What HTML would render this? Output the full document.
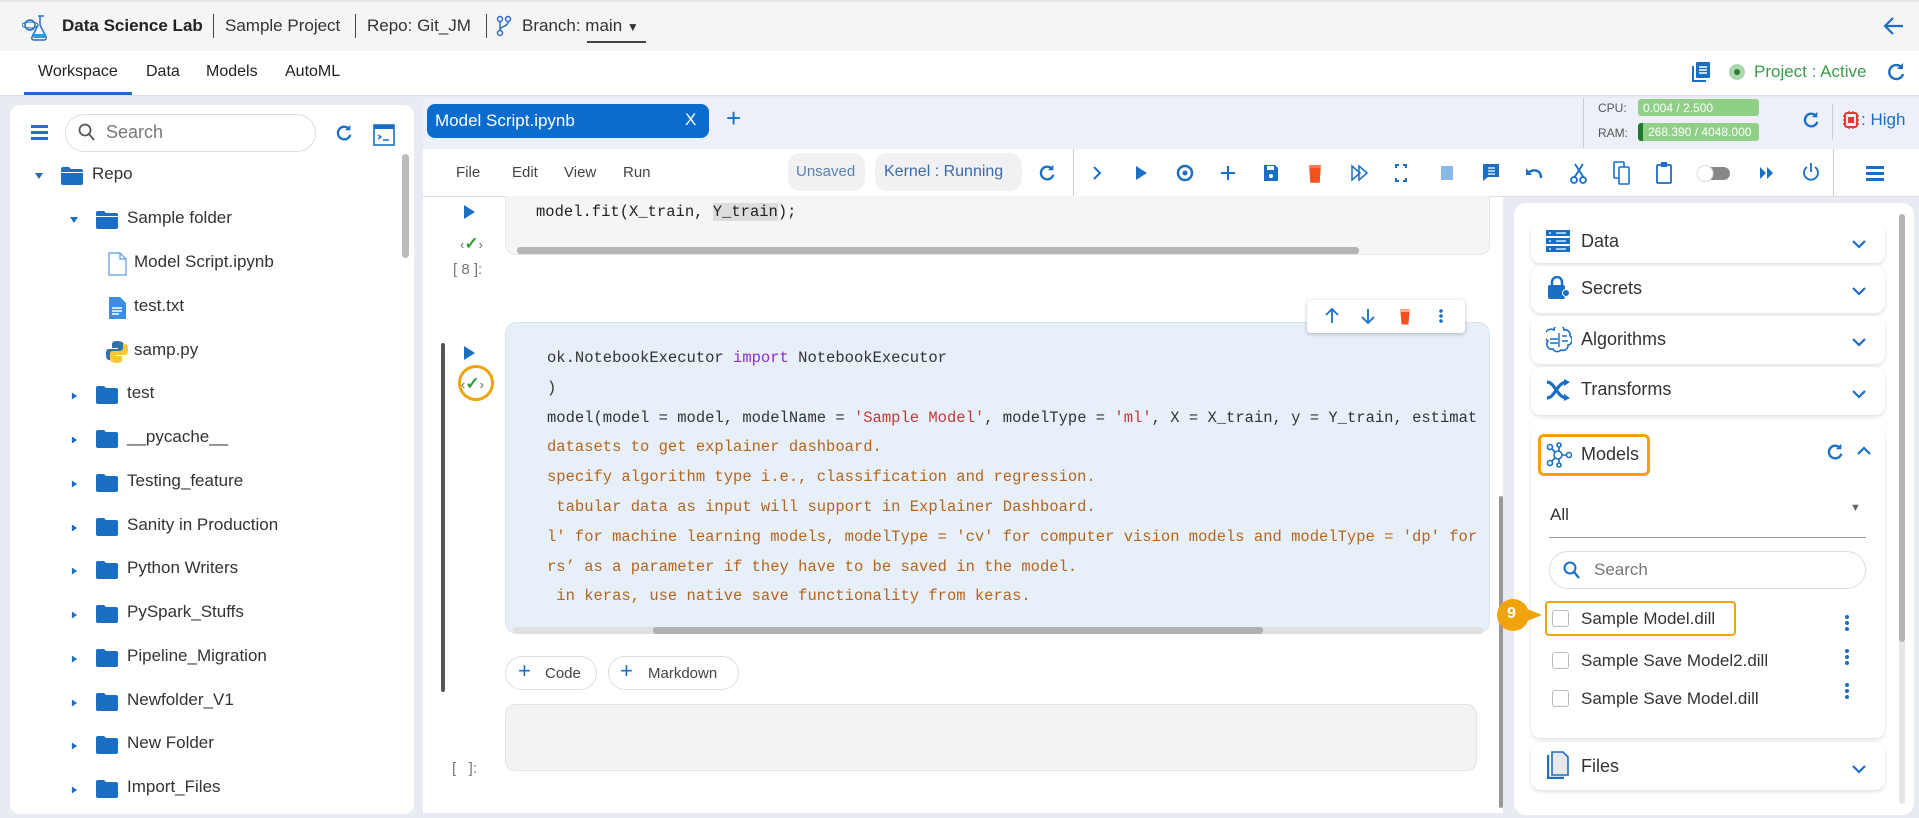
<!DOCTYPE html>
<html><head><meta charset="utf-8"><style>
*{box-sizing:border-box;margin:0;padding:0}
body{width:1919px;height:818px;overflow:hidden;background:#e9ebf2;font-family:"Liberation Sans",sans-serif;color:#333;position:relative}
.a{position:absolute}
.mono{font-family:"Liberation Mono",monospace;font-size:15.5px;white-space:pre}
.ti{position:absolute;font-size:17px;color:#333;white-space:nowrap}
.card{position:absolute;left:1531px;width:354px;background:#fff;border-radius:10px;box-shadow:0 2px 4px rgba(0,0,0,.12)}
.card .t{position:absolute;left:50px;top:10px;font-size:18px;color:#333}
.chev{position:absolute;right:18px;top:14px}
</style></head><body>
<!-- top header -->
<div class="a" style="left:0;top:0;width:1919px;height:51px;background:#f5f5f6;border-top:2px solid #e6e6e6"></div>
<svg class="a" style="left:22px;top:12px" width="28" height="30" viewBox="0 0 28 30"><circle cx="8" cy="13" r="5" fill="none" stroke="#2b6fbf" stroke-width="1.5"/><ellipse cx="8" cy="13" rx="8" ry="3" fill="none" stroke="#2b6fbf" stroke-width="1"/><path d="M16 4h6M18 4v9l6 12a2 2 0 0 1-2 3H12a2 2 0 0 1-2-3l6-12" fill="none" stroke="#2b6fbf" stroke-width="1.5"/><path d="M12 22h12l1 4H11z" fill="#2b9ae0"/></svg>
<div class="a" style="left:62px;top:16px;font-size:17px;font-weight:bold;color:#222">Data Science Lab</div>
<div class="a" style="left:213px;top:14px;width:1px;height:24px;background:#444"></div>
<div class="a" style="left:225px;top:16px;font-size:17px;color:#333">Sample Project</div>
<div class="a" style="left:355px;top:14px;width:1px;height:24px;background:#444"></div>
<div class="a" style="left:367px;top:16px;font-size:17px;color:#333">Repo: Git_JM</div>
<div class="a" style="left:486px;top:14px;width:1px;height:24px;background:#444"></div>
<svg class="a" style="left:496px;top:15px" width="16" height="22" viewBox="0 0 16 22"><circle cx="4" cy="4" r="2.5" fill="none" stroke="#2b6fbf" stroke-width="1.5"/><circle cx="12" cy="4" r="2.5" fill="none" stroke="#2b6fbf" stroke-width="1.5"/><circle cx="4" cy="18" r="2.5" fill="none" stroke="#2b6fbf" stroke-width="1.5"/><path d="M4 6.5v9M12 6.5c0 6-8 4-8 9" fill="none" stroke="#2b6fbf" stroke-width="1.5"/></svg>
<div class="a" style="left:522px;top:16px;font-size:17px;color:#333">Branch: main <span style="font-size:12px">▼</span></div>
<div class="a" style="left:587px;top:41px;width:59px;height:2px;background:#444"></div>
<svg class="a" style="left:1883px;top:16px" width="22" height="20" viewBox="0 0 22 20"><path d="M20 10H3M10 2L2 10l8 8" fill="none" stroke="#1a6fc4" stroke-width="2.2"/></svg>
<!-- nav -->
<div class="a" style="left:0;top:51px;width:1919px;height:45px;background:#fff;border-bottom:1px solid #dde"></div>
<div class="a" style="left:38px;top:63px;font-size:16px;color:#222">Workspace</div>
<div class="a" style="left:146px;top:63px;font-size:16px;color:#222">Data</div>
<div class="a" style="left:206px;top:63px;font-size:16px;color:#222">Models</div>
<div class="a" style="left:285px;top:63px;font-size:16px;color:#222">AutoML</div>
<div class="a" style="left:24px;top:92px;width:108px;height:3px;background:#1a6fc4"></div>
<svg class="a" style="left:1691px;top:61px" width="20" height="22" viewBox="0 0 20 22"><rect x="5" y="1" width="14" height="16" rx="1" fill="#1a6fc4"/><path d="M2 5v15h13" fill="none" stroke="#1a6fc4" stroke-width="2"/><path d="M8 6h8M8 9h8M8 12h8" stroke="#fff" stroke-width="1.5"/></svg>
<div class="a" style="left:1729px;top:64px;width:16px;height:16px;border-radius:50%;background:#a8d8ae"></div>
<div class="a" style="left:1734px;top:69px;width:6px;height:6px;border-radius:50%;background:#2e7d32"></div>
<div class="a" style="left:1754px;top:62px;font-size:17px;color:#3a9a4a">Project : Active</div>
<svg class="a" style="left:1886px;top:62px" width="20" height="20" viewBox="0 0 20 20"><path d="M16 6A7 7 0 1 0 17 12" fill="none" stroke="#1a6fc4" stroke-width="2.4"/><path d="M17 1v6h-6z" fill="#1a6fc4"/></svg>
<!-- left panel -->
<div class="a" style="left:10px;top:105px;width:404px;height:709px;background:#fff;border-radius:10px"></div>
<div class="a" style="left:31px;top:125px;width:17px;height:3px;background:#2b6fbf;box-shadow:0 6px 0 #2b6fbf,0 12px 0 #2b6fbf"></div>
<div class="a" style="left:65px;top:114px;width:251px;height:38px;border:1px solid #ddd;border-radius:19px"></div>
<svg class="a" style="left:78px;top:123px" width="18" height="19" viewBox="0 0 18 19"><circle cx="7" cy="7" r="5.5" fill="none" stroke="#555" stroke-width="1.8"/><path d="M11 11l5 6" stroke="#555" stroke-width="1.8"/></svg>
<div class="a" style="left:106px;top:122px;font-size:18px;color:#777">Search</div>
<svg class="a" style="left:335px;top:124px" width="18" height="18" viewBox="0 0 20 20"><path d="M16 6A7 7 0 1 0 17 12" fill="none" stroke="#1a6fc4" stroke-width="2.6"/><path d="M17 1v6h-6z" fill="#1a6fc4"/></svg>
<svg class="a" style="left:373px;top:124px" width="22" height="22" viewBox="0 0 22 22"><rect x="1" y="1" width="20" height="20" fill="none" stroke="#1a6fc4" stroke-width="1.6"/><rect x="1" y="1" width="20" height="4" fill="#1a6fc4"/><path d="M5 11l3 2-3 2M10 16h6" stroke="#1a6fc4" stroke-width="1.4" fill="none"/></svg>
<div class="a" style="left:402px;top:154px;width:7px;height:104px;background:#bbb;border-radius:4px"></div>
<svg width="0" height="0" style="position:absolute"><defs>
<symbol id="fold" viewBox="0 0 24 20"><path d="M1 3a2 2 0 0 1 2-2h6l2 2h10a2 2 0 0 1 2 2v12a2 2 0 0 1-2 2H3a2 2 0 0 1-2-2z" fill="#1a6fc4"/></symbol>
<symbol id="ofold" viewBox="0 0 24 20"><path d="M1 3a2 2 0 0 1 2-2h6l2 2h10a2 2 0 0 1 2 2v1H1z" fill="#1a6fc4"/><path d="M1 7h22v10a2 2 0 0 1-2 2H3a2 2 0 0 1-2-2z" fill="#1a6fc4"/></symbol>
<symbol id="rt" viewBox="0 0 8 10"><path d="M1 1l6 4-6 4z" fill="#1a6fc4"/></symbol>
<symbol id="dn" viewBox="0 0 10 8"><path d="M1 1h8l-4 6z" fill="#1a6fc4"/></symbol>
<symbol id="chv" viewBox="0 0 16 10"><path d="M2 2l6 6 6-6" fill="none" stroke="#1a6fc4" stroke-width="2.2"/></symbol>
</defs></svg>
<svg class="a" style="left:34px;top:172px" width="10" height="8"><use href="#dn"/></svg>
<svg class="a" style="left:60px;top:166px" width="24" height="20"><use href="#ofold"/></svg>
<div class="ti" style="left:92px;top:164px">Repo</div>
<svg class="a" style="left:69px;top:216px" width="10" height="8"><use href="#dn"/></svg>
<svg class="a" style="left:95px;top:210px" width="24" height="20"><use href="#ofold"/></svg>
<div class="ti" style="left:127px;top:208px">Sample folder</div>
<svg class="a" style="left:108px;top:252px" width="19" height="24" viewBox="0 0 19 24"><path d="M1 1h11l6 6v16H1z" fill="none" stroke="#5a9ae0" stroke-width="1.2"/><path d="M12 1v6h6" fill="none" stroke="#5a9ae0" stroke-width="1.2"/></svg>
<div class="ti" style="left:134px;top:252px">Model Script.ipynb</div>
<svg class="a" style="left:108px;top:296px" width="19" height="24" viewBox="0 0 19 24"><path d="M1 1h11l6 6v16H1z" fill="#3d8de0"/><path d="M4 12h10M4 15h10M4 18h7" stroke="#fff" stroke-width="1.4"/></svg>
<div class="ti" style="left:134px;top:296px">test.txt</div>
<svg class="a" style="left:105px;top:340px" width="24" height="24" viewBox="0 0 24 24"><path d="M12 1c-5 0-5 2-5 4v3h6v1H4c-3 0-3 3-3 6s1 5 3 5h2v-4c0-2 2-3 4-3h6c2 0 3-1 3-3V5c0-2-2-4-7-4z" fill="#3572a5"/><path d="M12 23c5 0 5-2 5-4v-3h-6v-1h9c3 0 3-3 3-6s-1-5-3-5h-2v4c0 2-2 3-4 3H8c-2 0-3 1-3 3v5c0 2 2 4 7 4z" fill="#f7c63d"/></svg>
<div class="ti" style="left:134px;top:340px">samp.py</div>
<svg class="a" style="left:71px;top:391px" width="7" height="10"><use href="#rt"/></svg><svg class="a" style="left:95px;top:385px" width="24" height="20"><use href="#fold"/></svg><div class="ti" style="left:127px;top:383px">test</div>
<svg class="a" style="left:71px;top:435px" width="7" height="10"><use href="#rt"/></svg><svg class="a" style="left:95px;top:429px" width="24" height="20"><use href="#fold"/></svg><div class="ti" style="left:127px;top:427px">__pycache__</div>
<svg class="a" style="left:71px;top:479px" width="7" height="10"><use href="#rt"/></svg><svg class="a" style="left:95px;top:473px" width="24" height="20"><use href="#fold"/></svg><div class="ti" style="left:127px;top:471px">Testing_feature</div>
<svg class="a" style="left:71px;top:523px" width="7" height="10"><use href="#rt"/></svg><svg class="a" style="left:95px;top:517px" width="24" height="20"><use href="#fold"/></svg><div class="ti" style="left:127px;top:515px">Sanity in Production</div>
<svg class="a" style="left:71px;top:566px" width="7" height="10"><use href="#rt"/></svg><svg class="a" style="left:95px;top:560px" width="24" height="20"><use href="#fold"/></svg><div class="ti" style="left:127px;top:558px">Python Writers</div>
<svg class="a" style="left:71px;top:610px" width="7" height="10"><use href="#rt"/></svg><svg class="a" style="left:95px;top:604px" width="24" height="20"><use href="#fold"/></svg><div class="ti" style="left:127px;top:602px">PySpark_Stuffs</div>
<svg class="a" style="left:71px;top:654px" width="7" height="10"><use href="#rt"/></svg><svg class="a" style="left:95px;top:648px" width="24" height="20"><use href="#fold"/></svg><div class="ti" style="left:127px;top:646px">Pipeline_Migration</div>
<svg class="a" style="left:71px;top:698px" width="7" height="10"><use href="#rt"/></svg><svg class="a" style="left:95px;top:692px" width="24" height="20"><use href="#fold"/></svg><div class="ti" style="left:127px;top:690px">Newfolder_V1</div>
<svg class="a" style="left:71px;top:741px" width="7" height="10"><use href="#rt"/></svg><svg class="a" style="left:95px;top:735px" width="24" height="20"><use href="#fold"/></svg><div class="ti" style="left:127px;top:733px">New Folder</div>
<svg class="a" style="left:71px;top:785px" width="7" height="10"><use href="#rt"/></svg><svg class="a" style="left:95px;top:779px" width="24" height="20"><use href="#fold"/></svg><div class="ti" style="left:127px;top:777px">Import_Files</div>
<!-- editor -->
<div class="a" style="left:423px;top:98px;width:1080px;height:51px;background:#edf0f8"></div>
<div class="a" style="left:427px;top:104px;width:282px;height:34px;background:#0a6ccf;border-radius:8px"></div>
<div class="a" style="left:435px;top:111px;font-size:17px;color:#fff">Model Script.ipynb</div>
<div class="a" style="left:685px;top:110px;font-size:17px;color:#fff">X</div>
<div class="a" style="left:726px;top:104px;font-size:26px;color:#1a6fc4;line-height:28px">+</div>
<div class="a" style="left:423px;top:149px;width:1080px;height:664px;background:#fff"></div>
<div class="a" style="left:1503px;top:149px;width:416px;height:47px;background:#fff"></div>
<div class="a" style="left:423px;top:196px;width:1496px;height:1px;background:#e0e0e0"></div>
<div class="a" style="left:456px;top:164px;font-size:15px;color:#444">File</div>
<div class="a" style="left:512px;top:164px;font-size:15px;color:#444">Edit</div>
<div class="a" style="left:564px;top:164px;font-size:15px;color:#444">View</div>
<div class="a" style="left:623px;top:164px;font-size:15px;color:#444">Run</div>
<div class="a" style="left:788px;top:153px;width:77px;height:38px;background:#f1f1f3;border-radius:12px"></div>
<div class="a" style="left:796px;top:163px;font-size:15px;color:#5a7fb0">Unsaved</div>
<div class="a" style="left:875px;top:153px;width:147px;height:38px;background:#f1f1f3;border-radius:12px"></div>
<div class="a" style="left:884px;top:163px;font-size:16px;color:#3a6aa8">Kernel : Running</div>
<svg class="a" style="left:1038px;top:164px" width="18" height="18" viewBox="0 0 20 20"><path d="M16 6A7 7 0 1 0 17 12" fill="none" stroke="#1a6fc4" stroke-width="2.6"/><path d="M17 1v6h-6z" fill="#1a6fc4"/></svg>
<div class="a" style="left:1073px;top:149px;width:1px;height:47px;background:#ccc"></div>
<div class="a" style="left:1833px;top:149px;width:1px;height:47px;background:#ccc"></div>
<svg class="a" style="left:1085px;top:160px" width="740" height="26" viewBox="1085 160 740 26">
<g fill="#1a6fc4" stroke="#1a6fc4">
<path d="M1094 167l6 6-6 6" fill="none" stroke-width="2"/>
<path d="M1136 166l11 7-11 7z" stroke="none"/>
<circle cx="1185" cy="173" r="7" fill="none" stroke-width="2.5"/><circle cx="1185" cy="173" r="2.5" stroke="none"/>
<path d="M1228 166v14M1221 173h14" fill="none" stroke-width="2"/>
<path d="M1264 165h11l3 3v13h-14z" stroke="none"/><rect x="1267" y="166" width="7" height="4" fill="#fff" stroke="none"/><circle cx="1271" cy="176" r="2" fill="#fff" stroke="none"/>
<path d="M1309 166h12M1310 168h10l-1 14h-8z" fill="#f4511e" stroke="#f4511e" stroke-width="1.5"/>
<path d="M1352 166l8 7-8 7zM1359 166l8 7-8 7z" fill="none" stroke-width="1.5"/>
<path d="M1396 168v-3h3M1406 168v-3h-3M1396 178v3h3M1406 178v3h-3" fill="none" stroke-width="2"/>
<rect x="1441" y="166" width="12" height="14" fill="#8ab8e6" stroke="none"/>
<path d="M1483 164h16v13h-11l-5 4z" stroke="none"/><path d="M1488 168h7M1488 171h7M1488 174h7" stroke="#fff" stroke-width="1.2" fill="none"/>
<path d="M1541 178c0-6-4-9-10-7l-3 2" fill="none" stroke-width="2.4"/><path d="M1526 168v7h6z" stroke="none"/>
<circle cx="1574" cy="180" r="3" fill="none" stroke-width="1.8"/><circle cx="1583" cy="180" r="3" fill="none" stroke-width="1.8"/><path d="M1575 164l9 14M1583 164l-9 14" fill="none" stroke-width="1.8"/>
<rect x="1614" y="162" width="10" height="16" rx="1" fill="none" stroke-width="1.6"/><rect x="1619" y="167" width="10" height="17" rx="1" fill="#fff" stroke-width="1.6"/>
<rect x="1657" y="165" width="14" height="18" rx="1" fill="none" stroke-width="1.8"/><rect x="1661" y="162" width="6" height="5" stroke="none"/>
<path d="M1760 167l6 6-6 6zM1767 167l6 6-6 6z" stroke="none"/>
<path d="M1807 167a7 7 0 1 0 8 0M1811 163v9" fill="none" stroke-width="1.8"/>
</g>
<rect x="1700" y="167" width="30" height="13" rx="6.5" fill="#888"/><circle cx="1705" cy="173.5" r="8" fill="#fff" stroke="#ddd"/>
</svg>
<div class="a" style="left:1866px;top:166px;width:18px;height:2.5px;background:#1a6fc4;box-shadow:0 6px 0 #1a6fc4,0 12px 0 #1a6fc4"></div>
<!-- cpu -->
<div class="a" style="left:1503px;top:98px;width:416px;height:51px;background:#edf0f8"></div>
<div class="a" style="left:1583px;top:98px;width:1px;height:50px;background:#ccc"></div>
<div class="a" style="left:1598px;top:101px;font-size:12px;color:#555">CPU:</div>
<div class="a" style="left:1598px;top:126px;font-size:12px;color:#555">RAM:</div>
<div class="a" style="left:1638px;top:99px;width:121px;height:17px;background:#8fcf86;border-radius:3px;font-size:12px;color:#fff;padding:2px 5px">0.004 / 2.500</div>
<div class="a" style="left:1638px;top:123px;width:121px;height:18px;background:#8fcf86;border-radius:3px;font-size:12px;color:#fff;padding:2px 5px;border-left:5px solid #1b7a2a">268.390 / 4048.000</div>
<svg class="a" style="left:1802px;top:111px" width="18" height="18" viewBox="0 0 20 20"><path d="M16 6A7 7 0 1 0 17 12" fill="none" stroke="#1a6fc4" stroke-width="2.6"/><path d="M17 1v6h-6z" fill="#1a6fc4"/></svg>
<div class="a" style="left:1832px;top:104px;width:1px;height:36px;background:#ccc"></div>
<svg class="a" style="left:1842px;top:110px" width="18" height="20" viewBox="0 0 18 20"><rect x="3" y="3" width="12" height="14" rx="2" fill="none" stroke="#e53935" stroke-width="2"/><rect x="6" y="7" width="6" height="6" fill="#e53935"/><path d="M1 6h2M1 10h2M1 14h2M15 6h2M15 10h2M15 14h2M7 1v2M11 1v2M7 17v2M11 17v2" stroke="#e53935" stroke-width="1.4"/></svg>
<div class="a" style="left:1861px;top:110px;font-size:17px;color:#1a6fc4">: High</div>
<!-- cell 1 -->
<svg class="a" style="left:464px;top:205px" width="11" height="14"><path d="M0 0l11 7-11 7z" fill="#1a6fc4"/></svg>
<div class="a" style="left:460px;top:234px;font-size:13px;color:#666">‹<b style="color:#2e9e3a;font-size:17px">✓</b>›</div>
<div class="a" style="left:453px;top:261px;font-size:15px;color:#777">[ 8 ]:</div>
<div class="a" style="left:505px;top:196px;width:985px;height:59px;background:#f5f5f5;border-radius:0 0 10px 10px;border:1px solid #e6e6e6;border-top:none"></div>
<div class="a mono" style="left:536px;top:203px;color:#222">model.fit(X_train, <span style="background:#ddd">Y_train</span>);</div>
<div class="a" style="left:517px;top:247px;width:842px;height:7px;background:#b5b5b5;border-radius:3px"></div>
<!-- cell 2 -->
<div class="a" style="left:441px;top:343px;width:4px;height:349px;background:#555;border-radius:2px"></div>
<svg class="a" style="left:464px;top:346px" width="11" height="14"><path d="M0 0l11 7-11 7z" fill="#1a6fc4"/></svg>
<div class="a" style="left:458px;top:365px;width:36px;height:36px;border:3px solid #f0a30a;border-radius:50%"></div>
<div class="a" style="left:461px;top:374px;font-size:13px;color:#666">‹<b style="color:#2e9e3a;font-size:17px">✓</b>›</div>
<div class="a" style="left:505px;top:322px;width:985px;height:312px;background:#e7eff9;border-radius:12px;border:1px solid #dde4ee"></div>
<div class="a mono" style="left:547px;top:344px;line-height:29.8px;color:#333">ok.NotebookExecutor <span style="color:#8e2ad0">import</span> NotebookExecutor
)
model(model = model, modelName = <span style="color:#c23a3a">'Sample Model'</span>, modelType = <span style="color:#c23a3a">'ml'</span>, X = X_train, y = Y_train, estimat<span style="color:#b5651d">
datasets to get explainer dashboard.
specify algorithm type i.e., classification and regression.
 tabular data as input will support in Explainer Dashboard.
l' for machine learning models, modelType = 'cv' for computer vision models and modelType = 'dp' for
rs’ as a parameter if they have to be saved in the model.
 in keras, use native save functionality from keras.</span></div>
<div class="a" style="left:1490px;top:322px;width:13px;height:312px;background:#fff"></div>
<div class="a" style="left:513px;top:627px;width:970px;height:7px;background:#e0e0e0;border-radius:3px"></div>
<div class="a" style="left:653px;top:627px;width:610px;height:7px;background:#b0b0b0;border-radius:3px"></div>
<div class="a" style="left:1307px;top:300px;width:158px;height:33px;background:#fff;border-radius:4px;box-shadow:0 1px 4px rgba(0,0,0,.25)"></div>
<svg class="a" style="left:1320px;top:306px" width="140" height="20" viewBox="0 0 140 20"><path d="M12 17V3M6 9l6-6 6 6M48 3v14M42 11l6 6 6-6" fill="none" stroke="#1a6fc4" stroke-width="1.8"/><path d="M80 4h10M81 6h8l-1 12h-6z" fill="#f4511e" stroke="#f4511e"/><circle cx="121" cy="5" r="1.8" fill="#1a6fc4"/><circle cx="121" cy="10" r="1.8" fill="#1a6fc4"/><circle cx="121" cy="15" r="1.8" fill="#1a6fc4"/></svg>
<div class="a" style="left:1499px;top:496px;width:4px;height:312px;background:#999;border-radius:2px"></div>
<!-- add buttons -->
<div class="a" style="left:505px;top:656px;width:92px;height:34px;border:1px solid #ddd;border-radius:17px"></div>
<div class="a" style="left:518px;top:658px;font-size:22px;color:#1a6fc4">+</div>
<div class="a" style="left:545px;top:665px;font-size:15px;color:#444">Code</div>
<div class="a" style="left:608px;top:656px;width:131px;height:34px;border:1px solid #ddd;border-radius:17px"></div>
<div class="a" style="left:620px;top:658px;font-size:22px;color:#1a6fc4">+</div>
<div class="a" style="left:648px;top:665px;font-size:15px;color:#444">Markdown</div>
<div class="a" style="left:505px;top:704px;width:972px;height:67px;background:#f3f3f4;border:1px solid #e3e3e3;border-radius:10px"></div>
<div class="a" style="left:452px;top:760px;font-size:15px;color:#777">[&nbsp;&nbsp;&nbsp;]:</div>
<!-- right panel -->
<div class="a" style="left:1514px;top:203px;width:400px;height:612px;background:#fff;border-radius:12px"></div>
<div class="a" style="left:1899px;top:214px;width:6px;height:590px;background:#e6e6e6;border-radius:3px"></div>
<div class="a" style="left:1899px;top:214px;width:6px;height:428px;background:#b5b5b5;border-radius:3px"></div>
<div class="card" style="top:221px;height:42px"><svg class="a" style="left:15px;top:9px" width="24" height="22" viewBox="0 0 24 22"><rect x="0" y="0" width="24" height="6" fill="#1a6fc4"/><rect x="0" y="8" width="24" height="6" fill="#1a6fc4"/><rect x="0" y="16" width="24" height="6" fill="#1a6fc4"/><path d="M3 3h2M3 11h2M3 19h2M10 3h10M10 11h10M10 19h10" stroke="#fff" stroke-width="1.2"/></svg><div class="t">Data</div><svg class="chev" style="top:18px" width="16" height="10"><use href="#chv"/></svg></div>
<div class="card" style="top:266px;height:47px"><svg class="a" style="left:15px;top:10px" width="24" height="24" viewBox="0 0 24 24"><path d="M6 9V6a5 5 0 0 1 10 0v3" fill="none" stroke="#1a6fc4" stroke-width="2.5"/><rect x="2" y="9" width="17" height="14" rx="2" fill="#1a6fc4"/><circle cx="20" cy="17" r="3.5" fill="#1a6fc4" stroke="#fff"/></svg><div class="t" style="top:12px">Secrets</div><svg class="chev" style="top:20px" width="16" height="10"><use href="#chv"/></svg></div>
<div class="card" style="top:316px;height:48px"><svg class="a" style="left:15px;top:11px" width="26" height="26" viewBox="0 0 26 26"><path d="M8 3a5 5 0 0 1 10 0a5 5 0 0 1 6 6a5 5 0 0 1-2 9a5 5 0 0 1-7 5a5 5 0 0 1-8-1a5 5 0 0 1-5-8a5 5 0 0 1 6-11z" fill="none" stroke="#1a6fc4" stroke-width="1.6"/><path d="M4 12h8M4 16h8M13 6v14M16 9h5M16 14h6" stroke="#1a6fc4" stroke-width="1.4"/></svg><div class="t" style="top:13px">Algorithms</div><svg class="chev" style="top:21px" width="16" height="10"><use href="#chv"/></svg></div>
<div class="card" style="top:367px;height:48px"><svg class="a" style="left:15px;top:12px" width="24" height="22" viewBox="0 0 24 22"><path d="M1 3c8 0 10 16 20 16M1 19c8 0 10-16 20-16" fill="none" stroke="#1a6fc4" stroke-width="3.2"/><path d="M18 0l6 3-6 4zM18 15l6 4-6 3z" fill="#1a6fc4"/></svg><div class="t" style="top:12px">Transforms</div><svg class="chev" style="top:22px" width="16" height="10"><use href="#chv"/></svg></div>
<div class="card" style="top:427px;height:311px"></div>
<div class="a" style="left:1538px;top:434px;width:112px;height:42px;border:3px solid #f0a30a;border-radius:6px"></div>
<svg class="a" style="left:1546px;top:442px" width="26" height="26" viewBox="0 0 26 26"><g fill="none" stroke="#1a6fc4" stroke-width="1.6"><circle cx="12" cy="13" r="4"/><circle cx="4" cy="5" r="2.5"/><circle cx="4" cy="21" r="2.5"/><circle cx="13" cy="3" r="2"/><circle cx="23" cy="13" r="2.5"/><circle cx="13" cy="23" r="2"/><path d="M6 7l3 3M6 19l3-3M13 5v4M16 13h4M13 17v4"/></g></svg>
<div class="a" style="left:1581px;top:444px;font-size:18px;color:#333">Models</div>
<svg class="a" style="left:1826px;top:443px" width="18" height="18" viewBox="0 0 20 20"><path d="M16 6A7 7 0 1 0 17 12" fill="none" stroke="#1a6fc4" stroke-width="2.6"/><path d="M17 1v6h-6z" fill="#1a6fc4"/></svg>
<svg class="a" style="left:1856px;top:446px" width="16" height="10"><g transform="rotate(180 8 5)"><use href="#chv"/></g></svg>
<div class="a" style="left:1550px;top:505px;font-size:17px;color:#333">All</div>
<div class="a" style="left:1850px;top:502px;font-size:11px;color:#666">▼</div>
<div class="a" style="left:1549px;top:537px;width:317px;height:1px;background:#999"></div>
<div class="a" style="left:1549px;top:551px;width:317px;height:38px;border:1px solid #ddd;border-radius:19px"></div>
<svg class="a" style="left:1563px;top:561px" width="18" height="19" viewBox="0 0 18 19"><circle cx="7" cy="7" r="5.5" fill="none" stroke="#1a6fc4" stroke-width="2"/><path d="M11 11l5 6" stroke="#1a6fc4" stroke-width="2.2"/></svg>
<div class="a" style="left:1594px;top:560px;font-size:17px;color:#777">Search</div>
<div class="a" style="left:1545px;top:601px;width:191px;height:35px;border:2px solid #f0a30a;border-radius:4px"></div>
<div class="a" style="left:1497px;top:599px;width:32px;height:32px;border-radius:50%;background:#f0a30a"></div>
<div class="a" style="left:1520px;top:606px;width:0;height:0;border-top:9px solid transparent;border-bottom:9px solid transparent;border-left:22px solid #f0a30a"></div>
<div class="a" style="left:1507px;top:605px;font-size:16px;font-weight:bold;color:#fff">9</div>
<div class="a" style="left:1552px;top:610px;width:17px;height:17px;border:1.5px solid #bbb;border-radius:3px"></div>
<div class="a" style="left:1581px;top:609px;font-size:17px;color:#333">Sample Model.dill</div>
<div class="a" style="left:1552px;top:652px;width:17px;height:17px;border:1.5px solid #bbb;border-radius:3px"></div>
<div class="a" style="left:1581px;top:651px;font-size:17px;color:#333">Sample Save Model2.dill</div>
<div class="a" style="left:1552px;top:690px;width:17px;height:17px;border:1.5px solid #bbb;border-radius:3px"></div>
<div class="a" style="left:1581px;top:689px;font-size:17px;color:#333">Sample Save Model.dill</div>
<svg class="a" style="left:1844px;top:614px" width="6" height="100"><g fill="#1a6fc4"><circle cx="3" cy="3" r="2"/><circle cx="3" cy="9" r="2"/><circle cx="3" cy="15" r="2"/><circle cx="3" cy="37" r="2"/><circle cx="3" cy="43" r="2"/><circle cx="3" cy="49" r="2"/><circle cx="3" cy="71" r="2"/><circle cx="3" cy="77" r="2"/><circle cx="3" cy="83" r="2"/></g></svg>
<div class="card" style="top:742px;height:48px"><svg class="a" style="left:16px;top:9px" width="22" height="28" viewBox="0 0 22 28"><path d="M1 4v23h16" fill="none" stroke="#1a6fc4" stroke-width="2.4"/><path d="M5 1h11l5 5v18H5z" fill="#e8e8ea" stroke="#1a6fc4" stroke-width="1.6"/></svg><div class="t" style="top:14px">Files</div><svg class="chev" style="top:22px" width="16" height="10"><use href="#chv"/></svg></div>
</body></html>
